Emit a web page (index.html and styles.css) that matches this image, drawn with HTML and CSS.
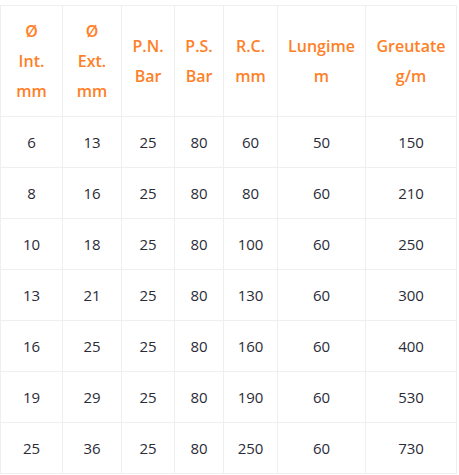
FILE: index.html
```html
<!DOCTYPE html>
<html>
<head>
<meta charset="utf-8">
<link rel="stylesheet" href="styles.css">
</head>
<body>
<table class="spec">
<colgroup>
<col class="c1"><col class="c2"><col class="c3"><col class="c4"><col class="c5"><col class="c6"><col class="c7">
</colgroup>
<thead>
<tr>
<th>Ø<br>Int.<br>mm</th>
<th>Ø<br>Ext.<br>mm</th>
<th>P.N.<br>Bar</th>
<th>P.S.<br>Bar</th>
<th>R.C.<br>mm</th>
<th>Lungime<br>m</th>
<th>Greutate<br>g/m</th>
</tr>
</thead>
<tbody>
<tr><td>6</td><td>13</td><td>25</td><td>80</td><td>60</td><td>50</td><td>150</td></tr>
<tr><td>8</td><td>16</td><td>25</td><td>80</td><td>80</td><td>60</td><td>210</td></tr>
<tr><td>10</td><td>18</td><td>25</td><td>80</td><td>100</td><td>60</td><td>250</td></tr>
<tr><td>13</td><td>21</td><td>25</td><td>80</td><td>130</td><td>60</td><td>300</td></tr>
<tr><td>16</td><td>25</td><td>25</td><td>80</td><td>160</td><td>60</td><td>400</td></tr>
<tr><td>19</td><td>29</td><td>25</td><td>80</td><td>190</td><td>60</td><td>530</td></tr>
<tr><td>25</td><td>36</td><td>25</td><td>80</td><td>250</td><td>60</td><td>730</td></tr>
</tbody>
</table>
</body>
</html>
```
FILE: styles.css
```css
html, body {
  margin: 0;
  padding: 0;
  background: #fff;
}
body {
  padding-top: 5px;
  font-family: "Open Sans", "DejaVu Sans", sans-serif;
  font-size: 15px;
  color: #2b2b38;
}
.spec {
  border-collapse: collapse;
  table-layout: fixed;
  width: 456px;
}
.c1 { width: 62px; }
.c2 { width: 59px; }
.c3 { width: 53px; }
.c4 { width: 49px; }
.c5 { width: 54px; }
.c6 { width: 88px; }
.c7 { width: 91px; }
.spec th, .spec td {
  border: 1px solid #efefef;
  text-align: center;
  vertical-align: middle;
  padding: 0;
}
.spec th {
  height: 110px;
  color: #ff7f27;
  font-size: 16px;
  font-weight: 600;
  line-height: 30px;
}
.spec td {
  height: 50px;
}
```
